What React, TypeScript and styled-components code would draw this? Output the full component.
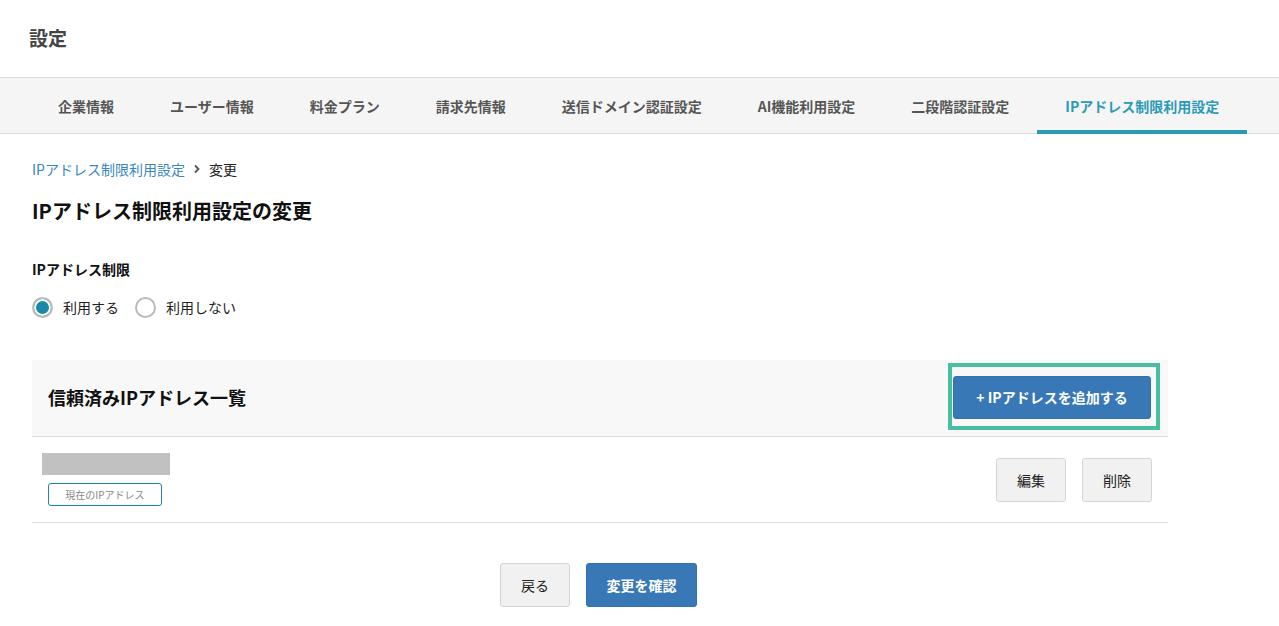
import styled, { createGlobalStyle } from 'styled-components';

const GlobalStyle = createGlobalStyle`
  html, body {
    margin:0;
    padding:0;
    background:#fff;
    font-family:"Noto Sans CJK JP", "Noto Sans", sans-serif;
    color:#222;
  }
  * { box-sizing:border-box; }
`

const tabs = [
  "企業情報",
  "ユーザー情報",
  "料金プラン",
  "請求先情報",
  "送信ドメイン認証設定",
  "AI機能利用設定",
  "二段階認証設定",
  "IPアドレス制限利用設定",
]

const App = () => {
  return (
    <>
      <GlobalStyle />
      <Header>
        <PageTitle>設定</PageTitle>
      </Header>
      <TabBar>
        {tabs.map((t, i) => (
          <Tab key={t} active={i === tabs.length - 1}>{t}</Tab>
        ))}
      </TabBar>

      <Main>
        <Breadcrumb>
          <CrumbLink href="#">IPアドレス制限利用設定</CrumbLink>
          <svg width="8" height="10" viewBox="0 0 8 10">
            <path d="M2 1.5 L5.5 5 L2 8.5" fill="none" stroke="#555" strokeWidth="1.8" />
          </svg>
          <span>変更</span>
        </Breadcrumb>

        <Heading>IPアドレス制限利用設定の変更</Heading>

        <FieldLabel>IPアドレス制限</FieldLabel>
        <RadioGroup>
          <RadioLabel>
            <Radio checked />
            利用する
          </RadioLabel>
          <RadioLabel>
            <Radio />
            利用しない
          </RadioLabel>
        </RadioGroup>

        <ListPanel>
          <ListHead>
            <ListTitle>信頼済みIPアドレス一覧</ListTitle>
            <Highlight>
              <PrimaryButton wide>+ IPアドレスを追加する</PrimaryButton>
            </Highlight>
          </ListHead>
          <ListRow>
            <AddressCell>
              <MaskedAddress />
              <CurrentBadge>現在のIPアドレス</CurrentBadge>
            </AddressCell>
            <RowActions>
              <SubButton>編集</SubButton>
              <SubButton>削除</SubButton>
            </RowActions>
          </ListRow>
        </ListPanel>

        <Footer>
          <SubButton>戻る</SubButton>
          <PrimaryButton>変更を確認</PrimaryButton>
        </Footer>
      </Main>
    </>
  )
}

export default App

const Header = styled.header`
  height:78px;
  padding:0 29px 2px;
  display:flex;
  align-items:center;
  border-bottom:1px solid #dcdcdc;
`

const PageTitle = styled.h1`
  margin:0;
  font-size:19px;
  font-weight:700;
  color:#444;
`

const TabBar = styled.nav`
  display:flex;
  height:56px;
  padding-left:30px;
  background:#f5f5f5;
  border-bottom:1px solid #dcdcdc;
`

const Tab = styled.div<{ active?: boolean }>`
  display:flex;
  align-items:center;
  padding:4px 28px 0;
  font-size:14px;
  font-weight:700;
  white-space:nowrap;
  color:${p => p.active ? '#2b9ab6' : '#555'};
  border-bottom:4px solid ${p => p.active ? '#2b9ab6' : 'transparent'};
  margin-bottom:-1px;
`

const Main = styled.main`
  padding:23px 32px 0 32px;
  width:1200px;
`

const Breadcrumb = styled.div`
  display:flex;
  align-items:center;
  gap:8px;
  font-size:14px;
  line-height:24px;
  color:#222;
`

const CrumbLink = styled.a`
  color:#3a87c0;
  text-decoration:none;
`

const Heading = styled.h2`
  margin:16px 0 0 0;
  font-size:20px;
  font-weight:700;
  line-height:28px;
  color:#111;
`

const FieldLabel = styled.div`
  margin-top:34px;
  font-size:14px;
  font-weight:700;
  line-height:20px;
  color:#111;
`

const RadioGroup = styled.div`
  display:flex;
  gap:16px;
  margin-top:18px;
`

const RadioLabel = styled.label`
  display:flex;
  align-items:center;
  gap:10px;
  font-size:14px;
  line-height:21px;
  color:#222;
`

const Radio = styled.span<{ checked?: boolean }>`
  width:21px;
  height:21px;
  border-radius:50%;
  border:2px solid #bbb;
  background:${p => p.checked ? '#1b8aa8' : '#fff'};
  box-shadow:${p => p.checked ? 'inset 0 0 0 2px #fff' : 'none'};
`

const ListPanel = styled.section`
  margin-top:42px;
  width:1136px;
`

const ListHead = styled.div`
  display:flex;
  align-items:center;
  justify-content:space-between;
  height:77px;
  padding:0 8px 0 16px;
  background:#f8f8f8;
  border-bottom:1px solid #ddd;
`

const ListTitle = styled.h3`
  margin:0 0 2px 0;
  font-size:18px;
  font-weight:700;
  color:#111;
`

const Highlight = styled.div`
  border:4px solid #47bfa0;
  padding:9px 5px 7px 1px;
  margin-bottom:4px;
`

const PrimaryButton = styled.button<{ wide?: boolean }>`
  height:${p => p.wide ? '43px' : '44px'};
  padding:0 ${p => p.wide ? '20px' : '19px'};
  min-width:${p => p.wide ? '198px' : '111px'};
  white-space:nowrap;
  background:#3878b6;
  color:#fff;
  border:1px solid #3470aa;
  border-radius:3px;
  font-family:inherit;
  font-size:14px;
  font-weight:700;
`

const ListRow = styled.div`
  display:flex;
  align-items:center;
  justify-content:space-between;
  height:86px;
  padding:0 16px 0 10px;
  border-bottom:1px solid #ddd;
`

const AddressCell = styled.div`
  display:flex;
  flex-direction:column;
  gap:8px;
`

const MaskedAddress = styled.div`
  width:128px;
  height:22px;
  background:#c1c1c1;
`

const CurrentBadge = styled.span`
  align-self:flex-start;
  margin-left:6px;
  width:114px;
  height:23px;
  display:flex;
  align-items:center;
  justify-content:center;
  border:1px solid #1b87a5;
  border-radius:3px;
  font-size:10px;
  color:#888;
`

const RowActions = styled.div`
  display:flex;
  gap:16px;
`

const SubButton = styled.button`
  width:70px;
  height:44px;
  background:#f1f1f1;
  border:1px solid #d4d4d4;
  border-radius:3px;
  font-family:inherit;
  font-size:14px;
  color:#222;
`

const Footer = styled.div`
  display:flex;
  justify-content:center;
  gap:16px;
  margin-top:40px;
  width:1136px;
  padding-right:3px;
`
